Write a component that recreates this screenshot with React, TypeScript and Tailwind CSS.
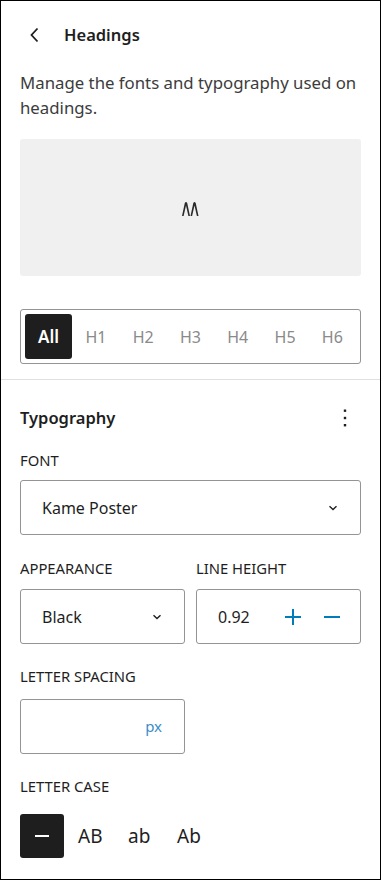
import React from "react";

const font = { fontFamily: '"Noto Sans", "Open Sans", sans-serif' };

function Chevron({ className = "" }: { className?: string }) {
  return (
    <svg width="14" height="14" viewBox="0 0 24 24" className={className}>
      <path d="M6 9l6 5.5L18 9" fill="none" stroke="#1e1e1e" strokeWidth="2.4" />
    </svg>
  );
}

export default function App() {
  const tabs = ["H1", "H2", "H3", "H4", "H5", "H6"];
  return (
    <div className="w-[381px] h-[880px] border border-black bg-white text-[#1e1e1e] flex flex-col" style={font}>
      <div className="px-[19px]">
        <div className="flex items-center h-[34px] mt-[17px]">
          <svg width="24" height="24" viewBox="0 0 24 24" className="ml-[3px]">
            <path d="M14.5 5.5L8.5 12l6 6.5" fill="none" stroke="#1e1e1e" strokeWidth="1.8" />
          </svg>
          <span className="ml-[17px] text-[16.5px] font-semibold leading-none">Headings</span>
        </div>
        <p className="mt-[18px] text-[16.8px] leading-[25px] text-[#3c3c3c]">
          Manage the fonts and typography used on headings.
        </p>
        <div className="mt-[19px] h-[137px] rounded-[3px] bg-[#f0f0f0] flex items-center justify-center">
          <svg width="20" height="16" viewBox="0 0 20 16" className="mt-[2px] ml-[1px]">
            <path d="M1 15 L3.8 2 Q5 0 6.2 2 L9 15 L7.4 15 L5 4.5 L2.6 15 Z" fill="#2a2a2a" />
            <path d="M9.5 15 L12.3 2 Q13.5 0 14.7 2 L17.5 15 L15.9 15 L13.5 4.5 L11.1 15 Z" fill="#2a2a2a" />
          </svg>
        </div>
        <div className="mt-[33px] h-[55px] rounded-[3px] border border-[#949494] flex items-center px-[4px] gap-0">
          <div className="flex-1 h-[45px] bg-[#1e1e1e] rounded-[3px] text-white flex items-center justify-center text-[17px] font-semibold">
            All
          </div>
          {tabs.map((t) => (
            <div key={t} className="flex-1 h-[45px] flex items-center justify-center text-[16px] text-[#8a8a8a]">
              {t}
            </div>
          ))}
        </div>
      </div>
      <div className="mt-[15px] border-t border-[#e0e0e0]" />
      <div className="px-[19px]">
        <div className="flex items-center justify-between mt-[26px] h-[24px]">
          <span className="text-[16.5px] font-semibold">Typography</span>
          <svg width="24" height="24" viewBox="0 0 24 24" className="mr-[4px]">
            <rect x="10.8" y="3.5" width="2.4" height="2.4" fill="#1e1e1e" />
            <rect x="10.8" y="10.8" width="2.4" height="2.4" fill="#1e1e1e" />
            <rect x="10.8" y="18" width="2.4" height="2.4" fill="#1e1e1e" />
          </svg>
        </div>
        <div className="mt-[22px] text-[14.8px] font-normal uppercase leading-[16px]">Font</div>
        <div className="mt-[12px] h-[55px] rounded-[3px] border border-[#949494] flex items-center justify-between pl-[21px] pr-[20px]">
          <span className="text-[16px]">Kame Poster</span>
          <Chevron />
        </div>
        <div className="mt-[25px] grid grid-cols-2 gap-x-[11px]">
          <div>
            <div className="text-[14.8px] font-normal uppercase leading-[16px]">Appearance</div>
            <div className="mt-[13px] h-[55px] rounded-[3px] border border-[#949494] flex items-center justify-between pl-[21px] pr-[20px]">
              <span className="text-[16px]">Black</span>
              <Chevron />
            </div>
          </div>
          <div>
            <div className="text-[14.8px] font-normal uppercase leading-[16px]">Line height</div>
            <div className="mt-[13px] h-[55px] rounded-[3px] border border-[#949494] flex items-center pl-[21px] pr-[18px]">
              <span className="text-[16px] flex-1">0.92</span>
              <svg width="20" height="20" viewBox="0 0 20 20" className="mr-[19px]">
                <path d="M10 2v16M2 10h16" stroke="#007cba" strokeWidth="2" />
              </svg>
              <svg width="20" height="20" viewBox="0 0 20 20">
                <path d="M2 10h16" stroke="#007cba" strokeWidth="2" />
              </svg>
            </div>
          </div>
        </div>
        <div className="mt-[24px] text-[14.8px] font-normal uppercase leading-[16px]">Letter spacing</div>
        <div className="mt-[15px] w-[165px] h-[55px] rounded-[3px] border border-[#949494] flex items-center justify-end pr-[22px]">
          <span className="text-[15px] text-[#3a8ec8]">px</span>
        </div>
        <div className="mt-[24px] text-[14.8px] font-normal uppercase leading-[16px]">Letter case</div>
        <div className="mt-[20px] flex items-center">
          <div className="w-[44px] h-[44px] bg-[#1e1e1e] rounded-[3px] flex items-center justify-center">
            <svg width="20" height="20" viewBox="0 0 20 20">
              <path d="M3 10h14" stroke="#fff" strokeWidth="2" />
            </svg>
          </div>
          <span className="ml-[14px] w-[50px] text-[19px]">AB</span>
          <span className="w-[49px] text-[19px]">ab</span>
          <span className="w-[49px] text-[19px]">Ab</span>
        </div>
      </div>
    </div>
  );
}
